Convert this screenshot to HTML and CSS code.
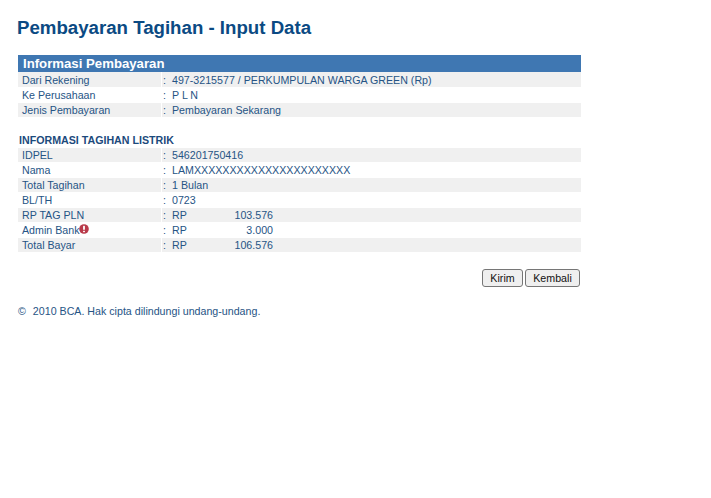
FILE: index.html
```html
<!DOCTYPE html>
<html lang="id">
<head>
<meta charset="utf-8">
<title>Pembayaran Tagihan - Input Data</title>
<link rel="stylesheet" href="styles.css">
</head>
<body>
<main class="page">
  <h1 class="title">Pembayaran Tagihan - Input Data</h1>
  <h2 class="bar">Informasi Pembayaran</h2>
  <div class="rows">
    <div class="row"><div class="label">Dari Rekening</div><div class="value"><span class="colon">:</span>497-3215577 / PERKUMPULAN WARGA GREEN (Rp)</div></div>
    <div class="row"><div class="label">Ke Perusahaan</div><div class="value"><span class="colon">:</span>P L N</div></div>
    <div class="row"><div class="label">Jenis Pembayaran</div><div class="value"><span class="colon">:</span>Pembayaran Sekarang</div></div>
  </div>
  <h3 class="subhead">INFORMASI TAGIHAN LISTRIK</h3>
  <div class="rows">
    <div class="row"><div class="label">IDPEL</div><div class="value"><span class="colon">:</span>546201750416</div></div>
    <div class="row"><div class="label">Nama</div><div class="value"><span class="colon">:</span>LAMXXXXXXXXXXXXXXXXXXXXXX</div></div>
    <div class="row"><div class="label">Total Tagihan</div><div class="value"><span class="colon">:</span>1 Bulan</div></div>
    <div class="row"><div class="label">BL/TH</div><div class="value"><span class="colon">:</span>0723</div></div>
    <div class="row"><div class="label">RP TAG PLN</div><div class="value"><span class="colon">:</span><span class="cur">RP</span><span class="amt">103.576</span></div></div>
    <div class="row"><div class="label">Admin Bank<svg class="info" viewBox="0 0 11 11" width="10" height="10" aria-hidden="true"><circle cx="5.5" cy="5.5" r="5.3" fill="#b93a4a"/><rect x="4.5" y="2" width="2" height="4.4" rx=".6" fill="#fff"/><rect x="4.5" y="7.3" width="2" height="1.8" rx=".5" fill="#fff"/></svg></div><div class="value"><span class="colon">:</span><span class="cur">RP</span><span class="amt">3.000</span></div></div>
    <div class="row"><div class="label">Total Bayar</div><div class="value"><span class="colon">:</span><span class="cur">RP</span><span class="amt">106.576</span></div></div>
  </div>
  <div class="actions">
    <button class="btn btn-kirim" type="button">Kirim</button>
    <button class="btn btn-kembali" type="button">Kembali</button>
  </div>
  <p class="copy"><span class="copy-mark">©</span>2010 BCA. Hak cipta dilindungi undang-undang.</p>
</main>
</body>
</html>
```
FILE: styles.css
```css
html, body { margin: 0; padding: 0; background: #fff; }
body { font-family: "Liberation Sans", Arial, sans-serif; font-size: 10.67px; color: #265485; }
.page { width: 563px; padding: 17px 0 0 18px; }
.title { margin: 0 0 16px -1px; font-size: 18.67px; line-height: 22px; font-weight: bold; color: #0b4a83; }
.bar { margin: 0; height: 17px; padding-left: 5px; background: #3f77b2; color: #fff; font-size: 13.2px; line-height: 17px; font-weight: bold; }
.rows { display: flex; flex-direction: column; gap: 1px; }
.row { display: flex; gap: 1px; height: 14px; line-height: 15px; }
.rows .row:nth-child(odd) .label, .rows .row:nth-child(odd) .value { background: #f0f0f0; }
.rows:first-of-type .row:first-child { height: 15px; }
.rows:first-of-type .row:first-child .label, .rows:first-of-type .row:first-child .value { padding-top: 2px; box-sizing: border-box; }
.rows:first-of-type .row:first-child .label { width: 143px; }
.label { width: 139px; flex: none; padding-left: 4px; white-space: nowrap; display: flex; align-items: center; }
.value { flex: 1; display: flex; align-items: center; white-space: nowrap; }
.colon { width: 10px; padding-left: 1px; box-sizing: border-box; }
.cur { width: 40px; }
.amt { width: 61px; text-align: right; }
.info { margin: -3px 0 0 0; }
.subhead { margin: 17px 0 2px 1px; font-size: 10.67px; line-height: 12px; font-weight: bold; color: #1c4a7c; }
.actions { display: flex; justify-content: flex-end; gap: 2px; margin-top: 17px; padding-right: 1px; }
.btn { height: 18px; padding: 0; border: 1px solid #767676; border-radius: 3px; background: #efefef; font: 10.67px "Liberation Sans", Arial, sans-serif; color: #111; }
.btn-kirim { width: 41px; }
.btn-kembali { width: 55px; }
.copy { margin: 18px 0 0; font-size: 10.67px; line-height: 12px; }
.copy-mark { margin-right: 7px; }
```
